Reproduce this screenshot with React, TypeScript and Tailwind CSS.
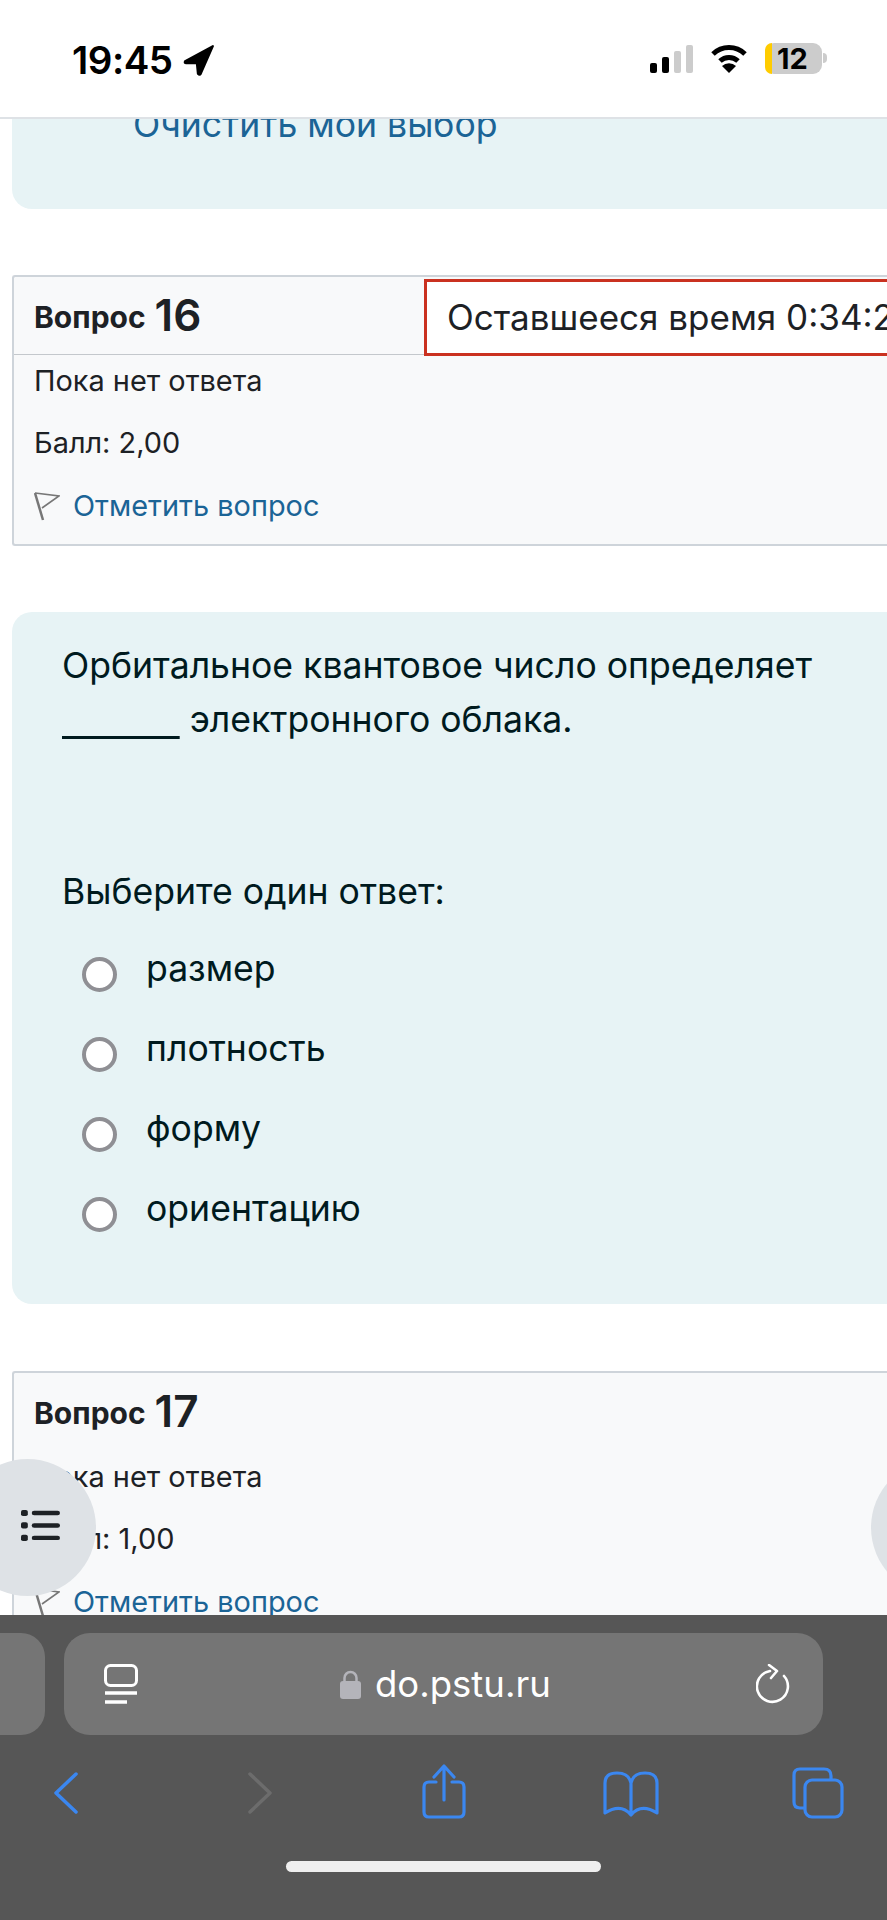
const font = { fontFamily: 'Inter, "Noto Sans", sans-serif' }

function StatusBar() {
  return (
    <div className="h-[119px] shrink-0 bg-white border-b-2 border-[#dee2e6] flex items-start relative z-10">
      <div className="ml-[72px] mt-[38px] flex items-center">
        <span className="text-[38.5px] leading-[44px] font-semibold text-black tracking-[-0.5px]">19:45</span>
        <svg width="32" height="32" viewBox="0 0 30 30" className="ml-[10px]">
          <path d="M28 2 L2 16 Q1 18 3 18 L13 18 L14 28 Q16 30 17 27 Z" fill="#000" stroke="#000" strokeWidth="2" strokeLinejoin="round" />
        </svg>
      </div>
      <div className="ml-auto mr-[60px] mt-[43px] flex items-start">
        <div className="flex items-end gap-[5px] h-[30px] pt-[2px]">
          <div className="w-[7px] h-[10px] rounded-[2px] bg-black" />
          <div className="w-[7px] h-[16px] rounded-[2px] bg-black" />
          <div className="w-[7px] h-[22px] rounded-[2px] bg-[#cccccc]" />
          <div className="w-[7px] h-[28px] rounded-[2px] bg-[#cccccc]" />
        </div>
        <svg width="38" height="30" viewBox="0 0 38 30" className="ml-[17px] mt-[1px]">
          <path d="M3 10 A23 23 0 0 1 35 10" fill="none" stroke="#000" strokeWidth="5" />
          <path d="M10 17 A13 13 0 0 1 28 17" fill="none" stroke="#000" strokeWidth="5" />
          <path d="M19 29 L12 22 A10 10 0 0 1 26 22 Z" fill="#000" />
        </svg>
        <div className="ml-[17px] w-[57px] h-[31px] rounded-[9px] bg-[#cccccc] flex items-center relative">
          <div className="w-[7px] h-full rounded-l-[9px] bg-[#ffcc00]" />
          <span className="ml-[5px] text-[29px] leading-[31px] font-bold text-black">12</span>
        </div>
        <div className="w-[4px] h-[10px] mt-[10px] ml-[1px] rounded-r-full bg-[#cccccc]" />
      </div>
    </div>
  )
}

function Flag() {
  return (
    <svg width="26" height="30" viewBox="0 0 26 30" className="shrink-0">
      <path d="M1 2 L9 29" fill="none" stroke="#777777" strokeWidth="2.5" />
      <path d="M1 2 L25 5 L8 17" fill="none" stroke="#777777" strokeWidth="1.6" />
    </svg>
  )
}

function QuestionInfo({ num, grade, timer }: { num: string; grade: string; timer?: boolean }) {
  return (
    <div className="w-[920px] ml-[12px] border-2 border-r-0 border-[#ced4da] rounded-[3px] bg-[#f8f9fa] text-[#1d2125] shrink-0">
      <div className="flex h-[78px]">
        <div className={`w-[410px] flex items-start pl-[20px] pt-[16px] ${timer ? 'border-b border-[#c4c8cc]' : ''}`}>
          <span className="text-[30px] leading-[44px] font-bold mt-[2px]">Вопрос</span>
          <span className="text-[44px] leading-[44px] font-semibold ml-[9px]">{num}</span>
        </div>
        {timer && (
          <div className="mt-[2px] border-[3px] border-[#ca3120] bg-white flex-1 pl-[20px] text-[35px] leading-[70px] whitespace-nowrap -mb-[1px]">
            Оставшееся время 0:34:25
          </div>
        )}
      </div>
      <div className="pl-[20px] pt-[3px] pb-[15px] text-[28.9px] leading-[46px]">
        <div>Пока нет ответа</div>
        <div className="mt-[16px]">Балл: {grade}</div>
        <div className="mt-[17px] flex items-center gap-[13px] text-[#1b6496]">
          <Flag />
          <span>Отметить вопрос</span>
        </div>
      </div>
    </div>
  )
}

function Answer({ text }: { text: string }) {
  return (
    <div className="h-[80px] flex items-center pl-[35px]">
      <div className="w-[35px] h-[35px] rounded-full bg-white border-[4px] border-[#8f8f94] shrink-0" />
      <span className="ml-[29px] text-[35.6px] leading-[44px] -mt-[10px]">{text}</span>
    </div>
  )
}

function Toolbar() {
  const blue = '#3b87f0'
  return (
    <div className="h-[305px] shrink-0 bg-[#565656] flex flex-col relative z-10">
      <div className="flex mt-[18px] h-[102px]">
        <div className="w-[45px] rounded-r-[24px] bg-[#757575]" />
        <div className="ml-[19px] w-[759px] rounded-[26px] bg-[#757575] flex items-center pl-[40px] pr-[33px] text-white">
          <svg width="34" height="40" viewBox="0 0 34 40" fill="none" stroke="#fff">
            <rect x="1.5" y="1.5" width="31" height="20" rx="5" strokeWidth="3" />
            <path d="M1 29 H33" strokeWidth="3.5" />
            <path d="M1 38 H23" strokeWidth="3.5" />
          </svg>
          <svg width="21" height="30" viewBox="0 0 21 30" className="ml-[202px]">
            <path d="M4.5 14 V9 A6 6 0 0 1 16.5 9 V14" fill="none" stroke="#b4b4ba" strokeWidth="2.5" />
            <rect x="0" y="12" width="21" height="18" rx="3" fill="#b4b4ba" />
          </svg>
          <span className="ml-[14px] text-[36.5px] leading-[44px] text-white">do.pstu.ru</span>
          <svg width="34" height="40" viewBox="0 0 34 40" fill="none" stroke="#fff" strokeWidth="2.6" strokeLinecap="round" strokeLinejoin="round" className="ml-auto">
            <path d="M14 7 A15.5 15.5 0 1 0 28 12" />
            <path d="M13 1 L21 7 L15 14" />
          </svg>
        </div>
      </div>
      <div className="flex items-start mt-[29px] h-[54px] pl-[54px]">
        <svg width="24" height="42" viewBox="0 0 24 42" fill="none" stroke={blue} strokeWidth="3.5" strokeLinecap="round" strokeLinejoin="round" className="mt-[8px]">
          <path d="M22 2 L2 21 L22 40" />
        </svg>
        <svg width="24" height="42" viewBox="0 0 24 42" fill="none" stroke="#6c6c6c" strokeWidth="3.5" strokeLinecap="round" strokeLinejoin="round" className="ml-[170px] mt-[8px]">
          <path d="M2 2 L22 21 L2 40" />
        </svg>
        <svg width="44" height="55" viewBox="0 0 44 55" fill="none" stroke={blue} strokeWidth="3.2" strokeLinecap="round" strokeLinejoin="round" className="ml-[150px]">
          <path d="M14 18 H7 Q2 18 2 23 V48 Q2 53 7 53 H37 Q42 53 42 48 V23 Q42 18 37 18 H30" />
          <path d="M22 36 V3 M12 13 L22 2 L32 13" />
        </svg>
        <svg width="56" height="46" viewBox="0 0 56 46" fill="none" stroke={blue} strokeWidth="3.2" strokeLinecap="round" strokeLinejoin="round" className="ml-[137px] mt-[7px]">
          <path d="M28 10 V43 M2 42 V12 Q2 2 14 2 Q26 2 28 12 Q30 2 42 2 Q54 2 54 12 V42 Q38 32 28 44 Q18 32 2 42 Z" />
        </svg>
        <svg width="52" height="52" viewBox="0 0 52 52" fill="none" stroke={blue} strokeWidth="3.2" strokeLinejoin="round" className="ml-[133px] mt-[3px]">
          <path d="M12 41 H8 Q2 41 2 35 V8 Q2 2 8 2 H32 Q39 2 39 9 V13" />
          <rect x="13" y="13" width="37" height="37" rx="7" />
        </svg>
      </div>
      <div className="mt-[43px] ml-[286px] w-[315px] h-[11px] rounded-full bg-[#efefef]" />
    </div>
  )
}

export default function App() {
  return (
    <div style={font} className="w-[887px] h-[1920px] overflow-hidden flex flex-col bg-white">
      <StatusBar />
      <div className="relative flex-1 min-h-0 overflow-hidden flex flex-col">
        <div className="ml-[12px] w-[920px] h-[90px] shrink-0 bg-[#e7f3f5] rounded-bl-[20px] pl-[121px] text-[35.6px] leading-[44px] text-[#1b6496] overflow-hidden">
          <div className="-mt-[16px]">Очистить мой выбор</div>
        </div>
        <div className="mt-[66px]">
          <QuestionInfo num="16" grade="2,00" timer />
        </div>
        <div className="ml-[12px] mt-[66px] w-[920px] h-[692px] shrink-0 bg-[#e7f3f5] rounded-l-[20px] pl-[50px] pt-[27px] text-[#001a1e]">
          <div className="text-[35.6px] leading-[54px] relative">
            <div>Орбитальное квантовое число определяет</div>
            <div><span className="underline underline-offset-4 tracking-[-0.2px]">{'\u00A0\u00A0\u00A0\u00A0\u00A0\u00A0\u00A0\u00A0\u00A0\u00A0\u00A0\u00A0'}</span> электронного облака.</div>
          </div>
          <div className="mt-[118px] text-[35.6px] leading-[54px]">Выберите один ответ:</div>
          <div className="-ml-[15px] mt-[15px]">
            <Answer text="размер" />
            <Answer text="плотность" />
            <Answer text="форму" />
            <Answer text="ориентацию" />
          </div>
        </div>
        <div className="mt-[67px]">
          <QuestionInfo num="17" grade="1,00" />
        </div>
        <div className="absolute -left-[41px] top-[1340px] w-[137px] h-[137px] rounded-full bg-[#dee2e6] flex items-center justify-center">
          <svg width="39" height="32" viewBox="0 0 40 36" className="ml-[25px] -mt-[6px]" fill="#1d2125" preserveAspectRatio="none">
            <rect x="0" y="1" width="7" height="7" rx="2" />
            <rect x="0" y="15" width="7" height="7" rx="2" />
            <rect x="0" y="29" width="7" height="7" rx="2" />
            <rect x="11" y="2" width="29" height="5" rx="2.5" />
            <rect x="11" y="16" width="29" height="5" rx="2.5" />
            <rect x="11" y="30" width="29" height="5" rx="2.5" />
          </svg>
        </div>
        <div className="absolute left-[871px] top-[1340px] w-[137px] h-[137px] rounded-full bg-[#dee2e6]" />
      </div>
      <Toolbar />
    </div>
  )
}
